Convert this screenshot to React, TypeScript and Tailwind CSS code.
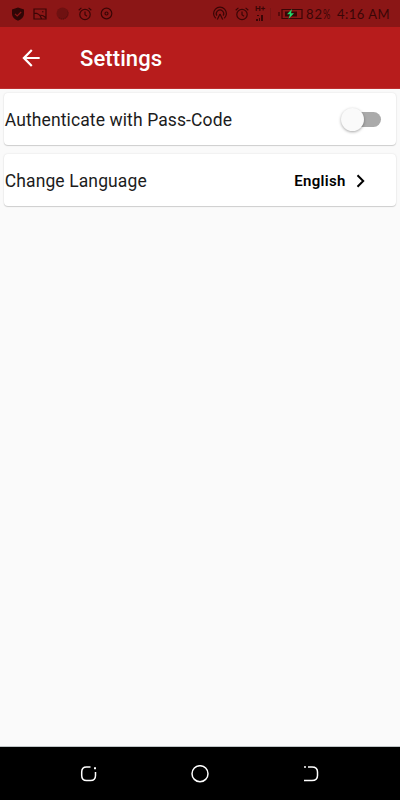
import type { ReactNode } from "react";

function StatusIcon({ className, box, children }: { className: string; box: string; children: ReactNode }) {
  return (
    <svg className={`shrink-0 ${className}`} viewBox={box} fill="none" stroke="currentColor" strokeWidth="1.2">
      {children}
    </svg>
  );
}

function Alarm({ className }: { className: string }) {
  return (
    <StatusIcon className={className} box="0 0 14 14">
      <circle cx="7" cy="7.5" r="5.2" />
      <path d="M7 4.5v3.3l2 1.4M.7 3.2 3.4.9M13.3 3.2 10.6.9" />
    </StatusIcon>
  );
}

function StatusBar() {
  return (
    <div className="flex h-[27px] items-center bg-[#8b1616] text-[#3a0606]">
      <StatusIcon className="ml-[11px] h-[14px] w-[14px]" box="0 0 14 14">
        <path d="M7 .5 13 2.5V7c0 3-2.5 5.3-6 6.7C3.5 12.3 1 10 1 7V2.5Z" fill="#300606" stroke="none" />
        <path d="m4 6.8 2.2 2.2L10.2 5" stroke="#8b1616" />
      </StatusIcon>
      <StatusIcon className="ml-2 h-[12px] w-[14px]" box="0 0 14 12">
        <path d="M1 1h12v10H1ZM1 5.200c4 0 6 1 7.500 5.500M6.500 7.500c2-.7 4 .2 6 2" />
        <circle cx="9.800" cy="3.800" r=".8" fill="currentColor" stroke="none" />
      </StatusIcon>
      <StatusIcon className="ml-[9px] h-[13px] w-[13px]" box="0 0 13 13">
        <circle cx="6.500" cy="6.500" r="6" fill="#6f1111" stroke="none" />
        <path d="M3 10.800a5.700 5.700 0 0 0 8.500-7" stroke="#581010" strokeDasharray="1 1" />
      </StatusIcon>
      <Alarm className="ml-[9px] h-[14px] w-[14px]" />
      <StatusIcon className="ml-2 h-[13px] w-[13px]" box="0 0 13 13">
        <circle cx="6.500" cy="6.500" r="5.300" />
        <circle cx="6.500" cy="6.500" r="1.500" />
      </StatusIcon>

      <StatusIcon className="ml-[99px] h-[15px] w-[16px]" box="0 0 16 15">
        <path d="M3.700 12.300a6.400 6.400 0 1 1 8.600 0M4.800 9.600a3.700 3.700 0 1 1 6.400 0M8 8 5.300 13.500M8 8l2.700 5.500" />
      </StatusIcon>
      <Alarm className="ml-[7px] h-[14px] w-[14px]" />
      <div className="ml-[6px] flex h-[18px] w-[12px] shrink-0 flex-col">
        <span className="text-[8px] leading-[8px] font-bold">H+</span>
        <svg className="mt-px ml-px h-[8px] w-[8px]" viewBox="0 0 8 8" fill="currentColor">
          <path d="M0 5h2v2H0ZM3 4h1v3H3ZM5 1h2v6H5ZM1 1h2v1H1Z" />
        </svg>
      </div>
      <div className="ml-[3px] h-3 w-px bg-[#7a1414]" />
      <StatusIcon className="ml-[7px] h-[12px] w-[25px]" box="0 0 25 12">
        <path d="M1 4v4M4 1.500h20v9H4Z" />
        <path d="M7 3.500h12v5H7Z" fill="#360606" stroke="none" />
        <path d="m14 1-5 5.300h3L10.500 11l5.500-5.800h-3Z" fill="#22d66a" stroke="none" />
      </StatusIcon>
      <span className="ml-[3px] w-[28px] shrink-0 pt-px font-['Lato',sans-serif] text-[13px] leading-[27px] tracking-[1px] whitespace-nowrap">
        82<span className="inline-block w-[8px] origin-left scale-x-[.7]">%</span>
      </span>
      <span className="ml-[3px] pt-px font-['Lato',sans-serif] text-[13px] leading-[27px] tracking-[.5px] whitespace-nowrap">4:16 AM</span>
    </div>
  );
}

function Header() {
  return (
    <header className="flex h-[62px] items-center border-b border-[#bd3030] bg-[#b71c1c] text-white">
      <svg className="ml-[18px] h-[26px] w-[26px]" viewBox="0 0 24 24" fill="currentColor">
        <path d="M20 11H7.830l5.590-5.590L12 4l-8 8 8 8 1.410-1.410L7.830 13H20v-2z" />
      </svg>
      <h1 className="ml-[36px] pt-[3px] text-[22px] leading-[30px] font-medium tracking-[.1px]">Settings</h1>
    </header>
  );
}

function Card({ label, children }: { label: string; children: ReactNode }) {
  return (
    <section className="flex h-[52px] items-center justify-between rounded-[4px] bg-white text-[#1c1c1c] shadow-[0_1px_1px_rgba(0,0,0,.15),0_0_2px_rgba(0,0,0,.12)]">
      <span className="pt-[2px] pl-[.4px] text-[17.500px] leading-6 tracking-[.11px]">{label}</span>
      {children}
    </section>
  );
}

function NavigationBar() {
  return (
    <nav className="flex h-[54px] items-center border-t border-[#bfc5c7] bg-black text-white">
      <svg className="ml-[80px] h-[18px] w-[18px]" viewBox="0 0 18 18" fill="none" stroke="currentColor" strokeWidth="1.500">
        <path d="M10.500 2H6.500Q1.700 2 1.700 7v3.500q0 5 4.800 5h4q5 0 5-5V7" />
        <path d="M14 2.200h2v2h-2Z" fill="currentColor" stroke="none" />
      </svg>
      <svg className="ml-[93px] h-[18px] w-[18px]" viewBox="0 0 18 18" fill="none" stroke="currentColor" strokeWidth="1.500">
        <circle cx="9" cy="8.700" r="8" />
      </svg>
      <svg className="ml-[93px] h-[18px] w-[18px]" viewBox="0 0 18 18" fill="none" stroke="currentColor" strokeWidth="1.500">
        <path d="M6 2h4q5.500 0 5.500 5v3.500q0 5-5.500 5H2" />
        <path d="M2 1.300h2v1.500H2Z" fill="currentColor" stroke="none" />
      </svg>
    </nav>
  );
}

export default function App() {
  return (
    <div className="flex h-[800px] w-[400px] flex-col overflow-hidden bg-[#fafafa] font-['Roboto',sans-serif]">
      <StatusBar />
      <Header />
      <main className="flex flex-1 flex-col gap-[9px] px-[4.400px] pt-[4.400px]">
        <Card label="Authenticate with Pass-Code">
          <button role="switch" aria-checked="false" aria-label="Authenticate with Pass-Code" className="mr-[15px] flex h-[15px] w-[38px] items-center rounded-full bg-[#aaa]">
            <span className="-ml-[2px] h-[23px] w-[23px] shrink-0 rounded-full bg-[#fafafa] shadow-[0_1px_3px_rgba(0,0,0,.35)]" />
          </button>
        </Card>
        <Card label="Change Language">
          <button className="mr-[24px] flex items-center pt-px text-black">
            <span className="text-[15px] leading-6 font-semibold tracking-[.3px]">English</span>
            <svg className="ml-1 h-[22px] w-[22px]" viewBox="0 0 22 22" fill="none" stroke="currentColor" strokeWidth="2">
              <path d="m7.500 5.300 5.700 5.700-5.700 5.700" />
            </svg>
          </button>
        </Card>
      </main>
      <NavigationBar />
    </div>
  );
}
